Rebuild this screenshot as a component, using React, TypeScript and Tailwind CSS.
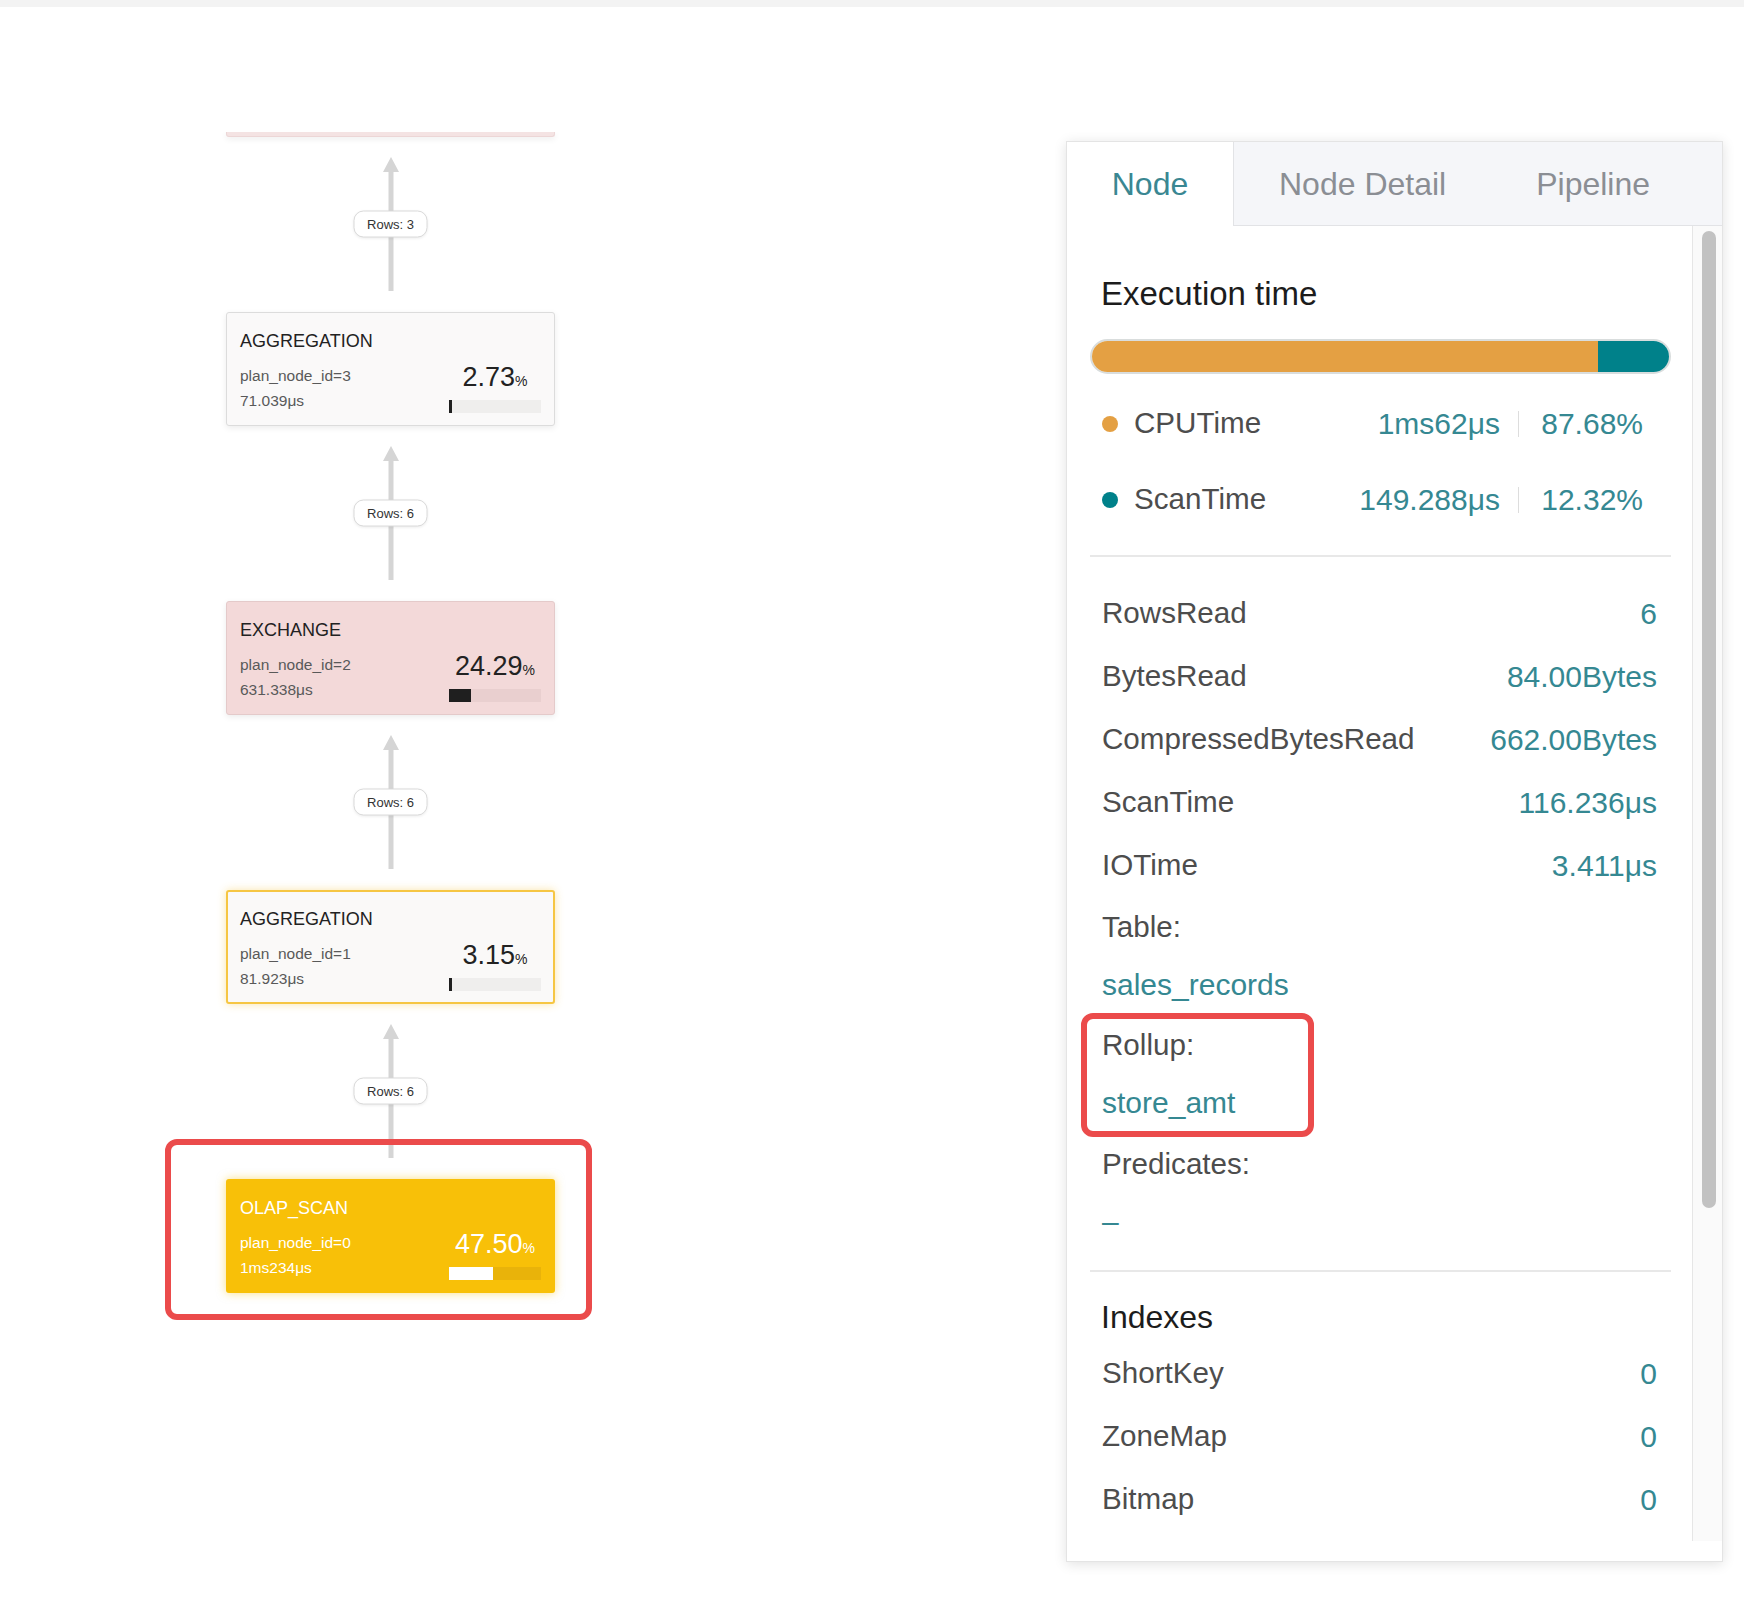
import React from 'react';

type Tone = 'plain' | 'hot' | 'picked' | 'scan';

type PlanNode = {
  name: string;
  id: number;
  time: string;
  pct: number;
  tone: Tone;
};

const plan: { node: PlanNode; rows?: number }[] = [
  { node: { name: 'AGGREGATION', id: 3, time: '71.039μs', pct: 2.73, tone: 'plain' }, rows: 6 },
  { node: { name: 'EXCHANGE', id: 2, time: '631.338μs', pct: 24.29, tone: 'hot' }, rows: 6 },
  { node: { name: 'AGGREGATION', id: 1, time: '81.923μs', pct: 3.15, tone: 'picked' }, rows: 6 },
  { node: { name: 'OLAP_SCAN', id: 0, time: '1ms234μs', pct: 47.5, tone: 'scan' } },
];

const toneBox: Record<Tone, string> = {
  plain: 'bg-[#faf9f9] border border-[#dcdcdc] pt-[17px] px-[13px] shadow-[0_2px_6px_rgba(0,0,0,0.08)]',
  hot: 'bg-[#f3d9d9] border border-[#e4caca] pt-[17px] px-[13px] shadow-[0_2px_6px_rgba(0,0,0,0.08)]',
  picked: 'bg-[#faf9f8] border-2 border-[#f6c643] pt-[16px] px-[12px] shadow-[0_0_8px_rgba(246,198,67,0.45)]',
  scan: 'bg-[#f8c008] pt-[18px] px-[14px] shadow-[0_0_10px_rgba(248,192,8,0.5)]',
};

const toneText: Record<Tone, { title: string; sub: string; track: string; fill: string }> = {
  plain: { title: 'text-[#222222]', sub: 'text-[#595959]', track: 'bg-[#efeeed]', fill: 'bg-[#1f1f1f]' },
  hot: { title: 'text-[#222222]', sub: 'text-[#595959]', track: 'bg-[#e9cfcf]', fill: 'bg-[#1f1f1f]' },
  picked: { title: 'text-[#222222]', sub: 'text-[#595959]', track: 'bg-[#efeeed]', fill: 'bg-[#1f1f1f]' },
  scan: { title: 'text-white', sub: 'text-white', track: 'bg-[#e9b30a]', fill: 'bg-white' },
};

function NodeCard({ node }: { node: PlanNode }) {
  const t = toneText[node.tone];
  return (
    <div className={`h-[114px] w-[329px] rounded-[3px] ${toneBox[node.tone]}`}>
      <div className={`text-[18px] leading-[22px] ${t.title}`}>{node.name}</div>
      <div className="mt-[11px] flex justify-between">
        <div className={`text-[15.5px] leading-[25px] ${t.sub}`}>
          <div>plan_node_id={node.id}</div>
          <div>{node.time}</div>
        </div>
        <div className="flex w-[92px] flex-col items-center">
          <div className={`text-[27px] leading-[28px] ${t.title}`}>
            {node.pct.toFixed(2)}
            <span className="text-[14px]">%</span>
          </div>
          <div className={`mt-[5px] h-[13px] w-full ${t.track}`}>
            <div className={`h-full ${t.fill}`} style={{ width: `${Math.max(node.pct, 3)}%` }} />
          </div>
        </div>
      </div>
    </div>
  );
}

function Edge({ rows }: { rows: number }) {
  return (
    <div className="relative mt-[20px] mb-[21px] h-[134px] w-[80px]">
      <svg width="80" height="134" className="absolute inset-0">
        <polygon points="40,0 48,15 32,15" fill="#d5d5d5" />
        <rect x="37.5" y="14" width="5" height="120" fill="#d5d5d5" />
      </svg>
      <div className="absolute left-1/2 top-1/2 flex h-[27px] -translate-x-1/2 -translate-y-1/2 items-center whitespace-nowrap rounded-[10px] border border-[#dadada] bg-white px-[13px] text-[13px] text-[#333333] shadow-[0_1px_3px_rgba(0,0,0,0.08)]">
        Rows: {rows}
      </div>
    </div>
  );
}

function Stat({ label, value }: { label: string; value: string }) {
  return (
    <div className="flex h-[63px] items-center justify-between pl-[12px] pr-[14px]">
      <span className="text-[29.6px] text-[#4d4d4d]">{label}</span>
      <span className="text-[30px] text-[#358892]">{value}</span>
    </div>
  );
}

function Timing({ color, label, value, pct }: { color: string; label: string; value: string; pct: string }) {
  return (
    <div className="flex h-[76px] items-center pl-[12px] pr-[28px] pt-[3px]">
      <span className={`h-4 w-4 rounded-full ${color}`} />
      <span className="ml-[16px] flex-1 text-[29.6px] text-[#4d4d4d]">{label}</span>
      <span className="text-[30px] text-[#358892]">{value}</span>
      <span className="ml-[18px] h-[26px] w-px bg-[#dddddd]" />
      <span className="w-[124px] text-right text-[30px] text-[#358892]">{pct}</span>
    </div>
  );
}

function Pair({ label, value }: { label: string; value: string }) {
  return (
    <>
      <div className="flex h-[57px] items-center pl-[12px] text-[29.6px] text-[#4d4d4d]">{label}</div>
      <div className="flex h-[57px] items-center pl-[12px] text-[30px] text-[#358892]">{value}</div>
    </>
  );
}

export default function App() {
  return (
    <div className="relative h-[1616px] w-[1744px] overflow-hidden bg-white font-['Liberation_Sans',Arial,sans-serif]">
      <div className="h-[7px] bg-[#f3f3f3]" />
      <div className="flex">
        {/* plan graph, scrolled so only the bottom of the upper node shows */}
        <div className="mt-[125px] h-[1300px] w-[1066px] overflow-hidden pl-[226px]">
          <div className="flex w-[329px] flex-col items-center">
            <div className="h-[5px] w-[329px] rounded-b-[3px] border-x border-b border-[#ecd6d6] bg-[#f4e3e3] shadow-[0_2px_6px_rgba(0,0,0,0.08)]" />
            <Edge rows={3} />
            {plan.map((p, i) => (
              <React.Fragment key={i}>
                <div className="relative">
                  <NodeCard node={p.node} />
                  {p.node.tone === 'scan' && (
                    <div className="absolute -left-[61px] -top-[40px] z-10 h-[181px] w-[427px] rounded-[12px] border-[6px] border-[#eb4b4b]" />
                  )}
                </div>
                {p.rows !== undefined && <Edge rows={p.rows} />}
              </React.Fragment>
            ))}
          </div>
        </div>

        {/* detail panel */}
        <div className="mt-[134px] flex h-[1421px] w-[657px] flex-col border border-[#e4e4e4] bg-white shadow-[0_2px_12px_rgba(0,0,0,0.12)]">
          <div className="flex h-[84px] shrink-0">
            <div className="flex w-[166px] items-center justify-center text-[32px] text-[#3a8792]">Node</div>
            <div className="flex flex-1 items-center border-b border-l border-[#e2e3e6] bg-[#f5f6f9] text-[32px] text-[#8b8e94]">
              <div className="px-[45px]">Node Detail</div>
              <div className="px-[45px]">Pipeline</div>
            </div>
          </div>

          <div className="flex h-[1315px] shrink-0">
            <div className="flex-1 overflow-hidden pl-[23px] pr-[21px]">
              <div className="pl-[11px] pt-[48px] text-[33px] font-medium leading-[40px] text-[#1c1c1c]">Execution time</div>
              <div className="mt-[25px] flex h-[35px] overflow-hidden rounded-full border-2 border-[#d9dddd]">
                <div className="h-full w-[87.68%] bg-[#e4a043]" />
                <div className="h-full flex-1 bg-[#00818a]" />
              </div>
              <div className="mt-[10px]">
                <Timing color="bg-[#e4a043]" label="CPUTime" value="1ms62μs" pct="87.68%" />
                <Timing color="bg-[#00818a]" label="ScanTime" value="149.288μs" pct="12.32%" />
              </div>
              <div className="mt-[19px] h-[2px] bg-[#e8e8e8]" />

              <div className="mt-[25px]">
                <Stat label="RowsRead" value="6" />
                <Stat label="BytesRead" value="84.00Bytes" />
                <Stat label="CompressedBytesRead" value="662.00Bytes" />
                <Stat label="ScanTime" value="116.236μs" />
                <Stat label="IOTime" value="3.411μs" />
              </div>
              <div className="mt-[2px]">
                <Pair label="Table:" value="sales_records" />
              </div>
              <div className="relative mt-[4px]">
                <Pair label="Rollup:" value="store_amt" />
                <div className="absolute -left-[9px] -top-[4px] h-[124px] w-[233px] rounded-[12px] border-[6px] border-[#eb4b4b]" />
              </div>
              <div className="mt-[5px]">
                <Pair label="Predicates:" value="–" />
              </div>
              <div className="mt-[20px] h-[2px] bg-[#e8e8e8]" />

              <div className="mt-[25px] pl-[11px] text-[32px] font-medium leading-[40px] text-[#1c1c1c]">Indexes</div>
              <div className="mt-[5px]">
                <Stat label="ShortKey" value="0" />
                <Stat label="ZoneMap" value="0" />
                <Stat label="Bitmap" value="0" />
              </div>
            </div>
            <div className="w-[30px] shrink-0 border-l border-[#e6e6e6] bg-[#fafafa] pl-[9px] pt-[5px]">
              <div className="h-[977px] w-[14px] rounded-full bg-[#c2c2c2]" />
            </div>
          </div>
          <div className="h-[20px] shrink-0" />
        </div>
      </div>
    </div>
  );
}
